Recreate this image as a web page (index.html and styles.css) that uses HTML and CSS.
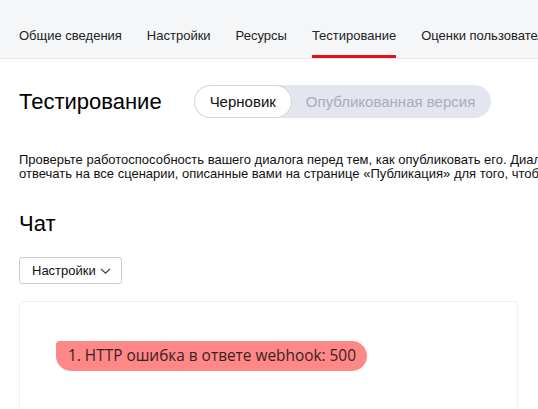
FILE: index.html
```html
<!DOCTYPE html>
<html lang="ru">
<head>
  <meta charset="UTF-8">
  <meta name="viewport" content="width=device-width, initial-scale=1.0">
  <title>Тестирование</title>
  <link rel="stylesheet" href="styles.css">
</head>
<body>
  <div class="page">
    <div class="header">
      <nav class="tabs">
        <a class="tab">Общие сведения</a>
        <a class="tab">Настройки</a>
        <a class="tab">Ресурсы</a>
        <a class="tab tab-active">Тестирование</a>
        <a class="tab">Оценки пользователей</a>
        <a class="tab">Статистика</a>
      </nav>
    </div>

    <div class="content">
      <div class="title-row">
        <h1>Тестирование</h1>
        <div class="switch">
          <span class="switch-item switch-item-active">Черновик</span>
          <span class="switch-item">Опубликованная версия</span>
        </div>
      </div>

      <p class="intro">
        Проверьте работоспособность вашего диалога перед тем, как опубликовать его. Диалог должен корректно<br>
        отвечать на все сценарии, описанные вами на странице «Публикация» для того, чтобы пройти модерацию.
      </p>

      <h2>Чат</h2>

      <button class="dropdown">Настройки
        <svg class="chevron" width="11" height="6" viewBox="0 0 11 6">
          <path d="M1 0.8l4.5 4.4 4.5-4.4" fill="none" stroke="#333" stroke-width="1.1"/>
        </svg>
      </button>

      <div class="chat">
        <div class="bubble">1. HTTP ошибка в ответе webhook: 500</div>
      </div>
    </div>
  </div>
</body>
</html>
```

FILE: styles.css
```css
body {
  margin: 0;
  font-family: "Liberation Sans", Arial, sans-serif;
  color: #000;
  background: #fff;
  overflow: hidden;
}

.page {
  width: 1000px;
}

.header {
  height: 58px;
  background: #f5f6f8;
  border-bottom: 1px solid #e4e5e8;
  display: flex;
  align-items: flex-end;
}

.tabs {
  display: flex;
  padding-left: 19px;
}

.tab {
  font-size: 13px;
  line-height: 16px;
  color: #222;
  margin-right: 25px;
  padding-bottom: 11px;
  border-bottom: 3px solid transparent;
  white-space: nowrap;
}

.tab-active {
  border-bottom-color: #e31212;
}

.content {
  padding: 0 19px;
}

.title-row {
  display: flex;
  align-items: center;
  margin-top: 26px;
}

h1 {
  margin: 0 32px 0 0;
  font-size: 22px;
  font-weight: normal;
  line-height: 33px;
}

.switch {
  display: flex;
  height: 33px;
  box-sizing: border-box;
  background: #e3e6ee;
  border-radius: 17px;
  padding: 1px;
}

.switch-item {
  font-size: 15px;
  line-height: 31px;
  padding: 0 15px;
  color: #a9adb6;
  border-radius: 16px;
}

.switch-item-active {
  background: #fff;
  color: #111;
  box-shadow: 0 0 0 1px #d4d7de;
}

.intro {
  margin: 35px 0 0;
  font-size: 13px;
  line-height: 14px;
  color: #111;
  white-space: nowrap;
}

h2 {
  margin: 30px 0 0;
  font-size: 22px;
  font-weight: normal;
  line-height: 26px;
}

.dropdown {
  margin-top: 20px;
  display: flex;
  align-items: center;
  gap: 4px;
  height: 27px;
  padding: 0 10px 0 12px;
  background: #fff;
  border: 1px solid #c9cbcf;
  border-radius: 3px;
  font-family: "Liberation Sans", Arial, sans-serif;
  font-size: 13px;
  color: #111;
}

.chat {
  margin-top: 17px;
  width: 499px;
  height: 140px;
  box-sizing: border-box;
  border: 1px solid #eeeff1;
  border-radius: 4px;
  padding: 39px 0 0 36px;
}

.bubble {
  display: inline-block;
  background: #fe8787;
  color: #3a2222;
  font-family: "Open Sans", sans-serif;
  font-size: 15.4px;
  line-height: 30px;
  padding: 0 11px 0 12px;
  border-radius: 4px 16px 16px 16px;
  white-space: nowrap;
}
```
